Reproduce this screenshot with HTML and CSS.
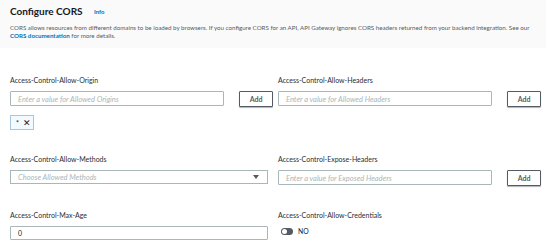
FILE: index.html
```html
<!DOCTYPE html>
<html lang="en">
<head>
  <meta charset="UTF-8" />
  <title>Configure CORS</title>
  <link rel="stylesheet" href="styles.css">
</head>
<body>
  <div class="header">
    <h1>Configure CORS <a class="info" href="#">Info</a></h1>
    <p class="desc">CORS allows resources from different domains to be loaded by browsers. If you configure CORS for an API, API Gateway ignores CORS headers returned from your backend integration. See our <a href="#">CORS documentation</a> for more details.</p>
  </div>

  <div class="form">
    <div class="field">
      <label>Access-Control-Allow-Origin</label>
      <div class="input-row">
        <input type="text" placeholder="Enter a value for Allowed Origins" />
        <button>Add</button>
      </div>
      <div class="tokens">
        <span class="token">* <span class="remove">✕</span></span>
      </div>
    </div>

    <div class="field">
      <label>Access-Control-Allow-Headers</label>
      <div class="input-row">
        <input type="text" placeholder="Enter a value for Allowed Headers" />
        <button>Add</button>
      </div>
    </div>

    <div class="field">
      <label>Access-Control-Allow-Methods</label>
      <div class="select wide">
        <span>Choose Allowed Methods</span>
        <span class="caret"></span>
      </div>
    </div>

    <div class="field">
      <label>Access-Control-Expose-Headers</label>
      <div class="input-row">
        <input type="text" placeholder="Enter a value for Exposed Headers" />
        <button>Add</button>
      </div>
    </div>

    <div class="field">
      <label>Access-Control-Max-Age</label>
      <input class="wide" type="text" value="0" />
    </div>

    <div class="field">
      <label>Access-Control-Allow-Credentials</label>
      <div class="toggle-row">
        <span class="toggle"><span class="knob"></span></span>
        <span>NO</span>
      </div>
    </div>
  </div>
</body>
</html>
```

FILE: styles.css
```css
body {
  margin: 0;
  font-family: 'Lato', sans-serif;
  color: #16191f;
  background: #fff;
}
a {
  color: #0073bb;
  text-decoration: none;
  font-weight: bold;
}
.header {
  box-sizing: border-box;
  background: #fafafa;
  padding: 4px 10px 0;
  height: 48px;
}
h1 {
  margin: 0;
  font-size: 10px;
  font-weight: bold;
  line-height: 14px;
}
.info {
  font-size: 6px;
  margin-left: 9px;
  vertical-align: 1px;
}
.desc {
  margin: 5px 0 0;
  font-size: 6.2px;
  line-height: 8px;
  color: #545b64;
}
.form {
  display: grid;
  grid-template-columns: 263px 263px;
  grid-template-rows: 79px 56px auto;
  column-gap: 5px;
  padding: 28px 5px 0 10px;
}
label {
  display: block;
  font-size: 7px;
  line-height: 8px;
  margin-bottom: 7px;
  color: #2a2e33;
}
.input-row {
  display: flex;
  gap: 15px;
  align-items: flex-start;
}
input {
  display: block;
  box-sizing: border-box;
  width: 214px;
  height: 15px;
  border: 1px solid #aab7b8;
  border-radius: 1px;
  padding: 0 7px;
  font-family: inherit;
  font-size: 7px;
  color: #16191f;
  outline: none;
}
input::placeholder {
  color: #aab7b8;
  font-style: italic;
  font-size: 7.5px;
}
.wide {
  width: 258px;
}
input.wide {
  height: 14px;
}
button {
  box-sizing: border-box;
  width: 34px;
  height: 16px;
  padding: 0;
  border: 1px solid #545b64;
  border-radius: 1px;
  background: #fff;
  box-shadow: 0 1px 1px rgba(0, 0, 0, 0.3);
  font-family: inherit;
  font-size: 7px;
  font-weight: bold;
  color: #545b64;
}
.tokens {
  display: flex;
  margin-top: 8px;
}
.token {
  display: inline-flex;
  align-items: center;
  gap: 4px;
  box-sizing: border-box;
  width: 24px;
  height: 15px;
  padding: 0 5px;
  background: #f1faff;
  border: 1px solid #a6c7e0;
  font-size: 7px;
  color: #16191f;
}
.remove {
  font-size: 9px;
  color: #16191f;
}
.select {
  box-sizing: border-box;
  height: 14px;
  border: 1px solid #aab7b8;
  padding: 0 7px;
  display: flex;
  align-items: center;
  justify-content: space-between;
  font-size: 7.5px;
  font-style: italic;
  color: #aab7b8;
}
.caret {
  width: 0;
  height: 0;
  border-left: 3px solid transparent;
  border-right: 3px solid transparent;
  border-top: 4px solid #545b64;
  margin-right: 1px;
}
.toggle-row {
  display: flex;
  align-items: center;
  gap: 5px;
  padding-top: 1px;
  font-size: 6.8px;
  margin-left: 3px;
}
.toggle {
  display: inline-flex;
  align-items: center;
  box-sizing: border-box;
  width: 12px;
  height: 7px;
  border-radius: 4px;
  background: #545b64;
  padding: 1px;
}
.knob {
  width: 5px;
  height: 5px;
  border-radius: 50%;
  background: #fff;
}
```
